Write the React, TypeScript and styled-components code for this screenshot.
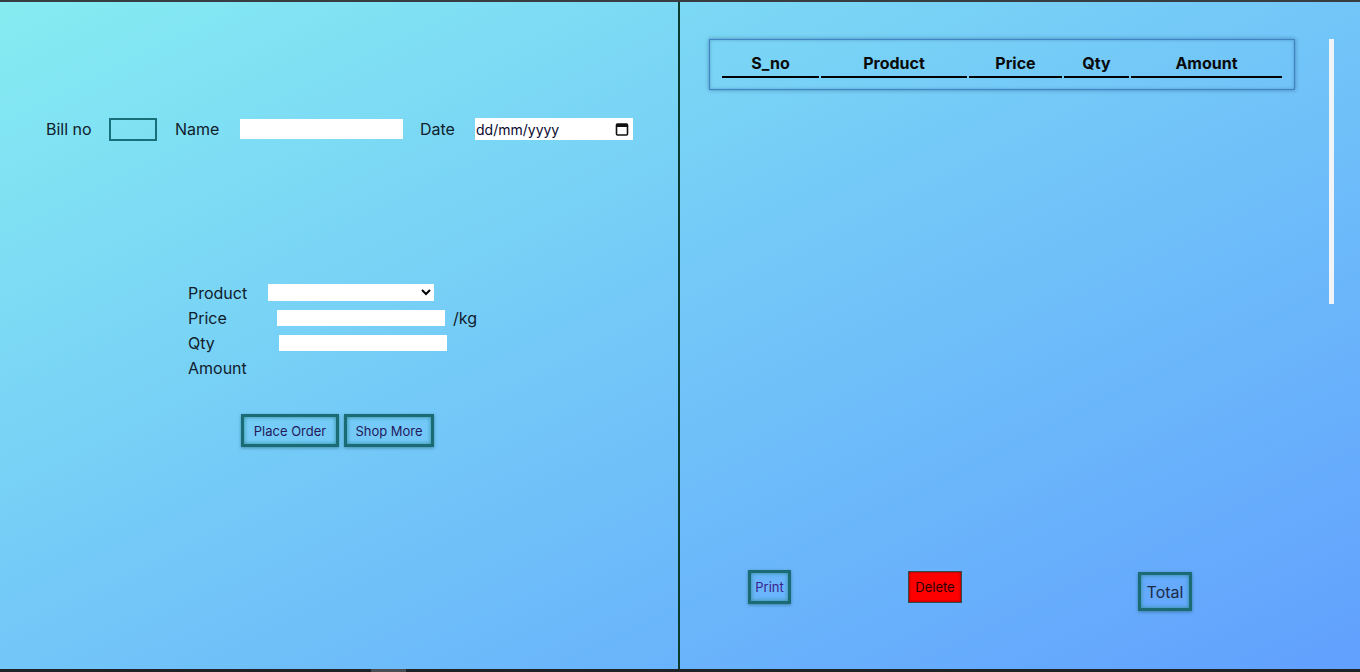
import styled, { createGlobalStyle } from "styled-components";

const Global = createGlobalStyle`
  html, body { margin: 0; padding: 0; }
  body {
    font-family: "Inter", "Noto Sans", sans-serif;
    color: #10202c;
    overflow: hidden;
  }
  * { box-sizing: border-box; }
`;

const Page = styled.div`
  width: 1360px;
  height: 672px;
  display: flex;
  flex-direction: column;
  background: #30363b;
`;
const TopEdge = styled.div`
  height: 2px;
  background: #383d42;
`;
const Main = styled.div`
  flex: 1;
  display: flex;
  background: linear-gradient(to bottom right, #86ecf1 0%, #72c6f8 50%, #61a0fe 100%);
`;
const BottomBar = styled.div`
  height: 3px;
  background: #1e2327;
  display: flex;
`;
const Thumb = styled.div`
  margin-left: 371px;
  width: 35px;
  background: #4a4e52;
`;

/* ---------- left ---------- */
const Left = styled.section`
  width: 680px;
  border-right: 2px solid #0b3b2f;
  display: flex;
  flex-direction: column;
`;
const BillRow = styled.div`
  margin-top: 115px;
  padding-left: 46px;
  display: flex;
  align-items: center;
  height: 24px;
`;
const Label = styled.label<{ $w: number }>`
  width: ${(p) => p.$w}px;
  flex-shrink: 0;
  font-size: 16px;
  white-space: nowrap;
`;
const BillBox = styled.input`
  width: 48px;
  height: 23px;
  border: 2px solid #176f7a;
  background: transparent;
  margin-right: 18px;
  outline: none;
`;
const NameInput = styled.input`
  width: 163px;
  height: 20px;
  border: none;
  background: #fff;
  margin-right: 17px;
  outline: none;
`;
const DateBox = styled.div`
  width: 158px;
  height: 22px;
  background: #fff;
  display: flex;
  align-items: center;
  padding: 0 4px 0 1px;
`;
const DateText = styled.input`
  flex: 1;
  min-width: 0;
  border: none;
  outline: none;
  font-family: inherit;
  font-size: 14px;
  padding: 0;
  color: #000;
  &::placeholder { color: #0a0a30; }
`;

const Form = styled.div`
  margin-top: 139px;
  padding-left: 188px;
  display: flex;
  flex-direction: column;
`;
const FormRow = styled.div`
  height: 25px;
  display: flex;
  align-items: center;
`;
const FormLabel = styled.span<{ $w: number }>`
  width: ${(p) => p.$w}px;
  font-size: 16px;
`;
const Select = styled.select`
  width: 166px;
  height: 17px;
  border: none;
  background: #fff;
  font-size: 12px;
  padding: 0;
  outline: none;
`;
const FieldInput = styled.input`
  width: 168px;
  height: 16px;
  border: none;
  background: #fff;
  outline: none;
`;
const Unit = styled.span`
  margin-left: 8px;
  font-size: 16px;
`;

const Buttons = styled.div`
  margin-top: 34px;
  padding-left: 241px;
  display: flex;
  gap: 5px;
`;
const GlowButton = styled.button<{ $w: number; $h: number; $size?: number; $ink?: string }>`
  width: ${(p) => p.$w}px;
  height: ${(p) => p.$h}px;
  border: 3px solid #1b6b74;
  background: transparent;
  box-shadow: inset 0 0 4px #2a8a95, 0 1px 3px rgba(20, 80, 90, 0.5);
  font-family: inherit;
  font-size: ${(p) => p.$size ?? 13}px;
  color: ${(p) => p.$ink ?? "#231a5c"};
  padding: 0;
  cursor: pointer;
`;

/* ---------- right ---------- */
const Right = styled.section`
  flex: 1;
  display: flex;
  flex-direction: column;
  padding: 37px 0 0 29px;
`;
const TopArea = styled.div`
  display: flex;
  align-items: flex-start;
  height: 265px;
`;
const TableBox = styled.div`
  width: 586px;
  height: 51px;
  border: 1px solid #3f84c4;
  box-shadow: 0 0 4px rgba(10, 40, 90, 0.45), inset 0 0 3px rgba(10, 40, 90, 0.3);
  padding: 12px 0 0 10px;
`;
const Table = styled.table`
  border-spacing: 2px 0;
  border-collapse: separate;
`;
const Th = styled.th<{ $w: number }>`
  width: ${(p) => p.$w}px;
  font-size: 16px;
  font-weight: 700;
  color: #0a0a0a;
  border-bottom: 2px solid #000;
  padding: 1px 0 3px;
  text-align: center;
`;
const ScrollRail = styled.div`
  margin-left: 34px;
  width: 5px;
  height: 265px;
  background: #f1f4f7;
`;
const Actions = styled.div`
  margin-top: 266px;
  display: flex;
  align-items: flex-start;
`;
const DeleteButton = styled.button`
  margin-left: 117px;
  margin-top: 1px;
  width: 54px;
  height: 32px;
  border: 1px solid #2f4f4f;
  background: #ff0000;
  box-shadow: inset 0 0 3px #700;
  font-family: inherit;
  font-size: 13px;
  color: #2a0000;
  padding: 0;
`;
const TotalWrap = styled.div`
  margin-left: 176px;
  margin-top: 2px;
`;
const PrintWrap = styled.div`
  margin-left: 39px;
`;

const Calendar = () => (
  <svg width="14" height="14" viewBox="0 0 14 14">
    <rect x="1.5" y="2" width="11" height="11" rx="1" fill="none" stroke="#111" strokeWidth="1.6" />
    <rect x="1.5" y="2" width="11" height="3" fill="#111" />
  </svg>
);

export default function App() {
  return (
    <Page>
      <Global />
      <TopEdge />
      <Main>
        <Left>
          <BillRow>
            <Label $w={63}>Bill no</Label>
            <BillBox />
            <Label $w={65}>Name</Label>
            <NameInput />
            <Label $w={55}>Date</Label>
            <DateBox>
              <DateText placeholder="dd/mm/yyyy" />
              <Calendar />
            </DateBox>
          </BillRow>
          <Form>
            <FormRow>
              <FormLabel $w={80}>Product</FormLabel>
              <Select>
                <option></option>
              </Select>
            </FormRow>
            <FormRow>
              <FormLabel $w={89}>Price</FormLabel>
              <FieldInput />
              <Unit>/kg</Unit>
            </FormRow>
            <FormRow>
              <FormLabel $w={91}>Qty</FormLabel>
              <FieldInput />
            </FormRow>
            <FormRow>
              <FormLabel $w={80}>Amount</FormLabel>
            </FormRow>
          </Form>
          <Buttons>
            <GlowButton $w={98} $h={33}>Place Order</GlowButton>
            <GlowButton $w={90} $h={33}>Shop More</GlowButton>
          </Buttons>
        </Left>
        <Right>
          <TopArea>
            <TableBox>
              <Table>
                <thead>
                  <tr>
                    <Th $w={97}>S_no</Th>
                    <Th $w={146}>Product</Th>
                    <Th $w={93}>Price</Th>
                    <Th $w={65}>Qty</Th>
                    <Th $w={151}>Amount</Th>
                  </tr>
                </thead>
              </Table>
            </TableBox>
            <ScrollRail />
          </TopArea>
          <Actions>
            <PrintWrap>
              <GlowButton $w={43} $h={34} $ink="#3a1f8c">Print</GlowButton>
            </PrintWrap>
            <DeleteButton>Delete</DeleteButton>
            <TotalWrap>
              <GlowButton $w={54} $h={39} $size={16} $ink="#1c2a48">Total</GlowButton>
            </TotalWrap>
          </Actions>
        </Right>
      </Main>
      <BottomBar>
        <Thumb />
      </BottomBar>
    </Page>
  );
}
